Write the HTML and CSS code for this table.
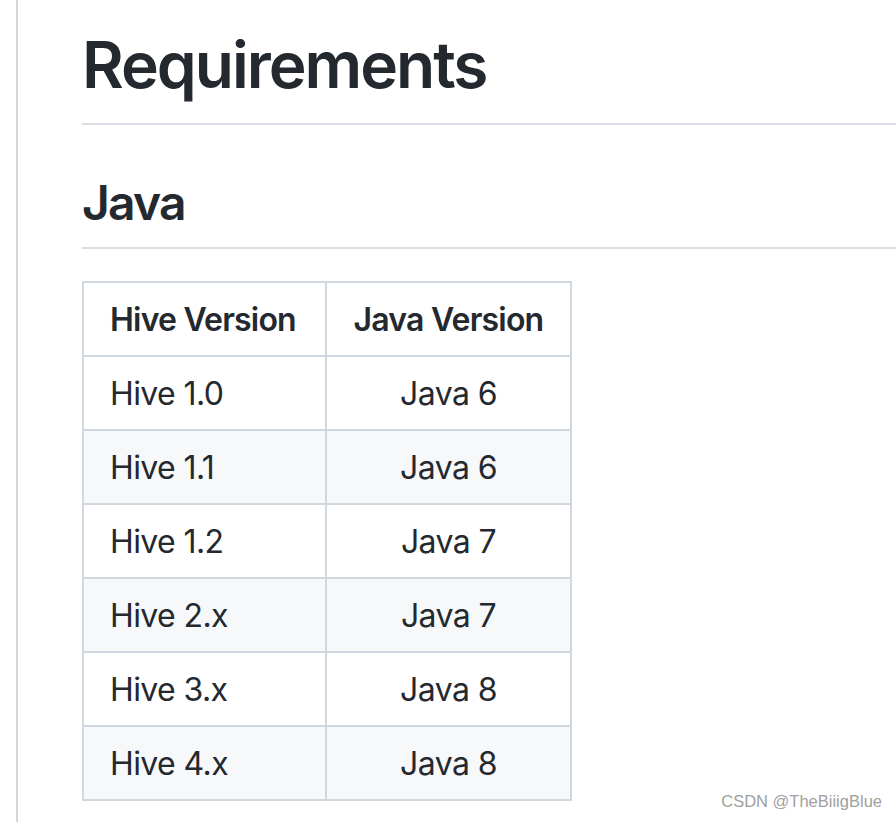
FILE: index.html
```html
<!DOCTYPE html>
<html lang="en">
<head>
<meta charset="utf-8">
<title>Requirements</title>
<link rel="stylesheet" href="styles.css">
</head>
<body>
<div class="page">
  <article class="markdown">
    <h1 class="h1">Requirements</h1>
    <h2 class="h2">Java</h2>
    <table class="tbl">
      <thead>
        <tr><th class="c1">Hive Version</th><th class="c2">Java Version</th></tr>
      </thead>
      <tbody>
        <tr><td class="c1">Hive 1.0</td><td class="c2">Java 6</td></tr>
        <tr><td class="c1">Hive 1.1</td><td class="c2">Java 6</td></tr>
        <tr><td class="c1">Hive 1.2</td><td class="c2">Java 7</td></tr>
        <tr><td class="c1">Hive 2.x</td><td class="c2">Java 7</td></tr>
        <tr><td class="c1">Hive 3.x</td><td class="c2">Java 8</td></tr>
        <tr><td class="c1">Hive 4.x</td><td class="c2">Java 8</td></tr>
      </tbody>
    </table>
  </article>
  <div class="watermark">CSDN @TheBiiigBlue</div>
</div>
</body>
</html>
```
FILE: styles.css
```css
html, body {
  margin: 0;
  padding: 0;
  background: #ffffff;
  overflow: hidden;
}
body {
  font-family: Inter, "Liberation Sans", sans-serif;
  color: #24292f;
  width: 896px;
  height: 822px;
}
.page {
  position: relative;
  height: 822px;
  padding-left: 16px;
  box-sizing: border-box;
}
.markdown {
  border-left: 2px solid #d0d7de;
  height: 822px;
  padding-left: 64px;
  box-sizing: border-box;
  font-size: 32px;
  line-height: 1.5;
}
.h1 {
  margin: 0 0 32px 0;
  padding-top: 25px;
  padding-bottom: 18px;
  font-size: 64px;
  line-height: 80px;
  font-weight: 600;
  border-bottom: 2px solid #d8dee4;
  letter-spacing: -2px;
}
.h2 {
  margin: 48px 0 32px 0;
  padding-bottom: 14px;
  font-size: 48px;
  line-height: 60px;
  font-weight: 600;
  border-bottom: 2px solid #d8dee4;
  letter-spacing: -1.8px;
}
.tbl {
  border-collapse: collapse;
  border-spacing: 0;
  table-layout: fixed;
  width: 490px;
  margin-top: 1px;
}
.tbl th, .tbl td {
  border: 2px solid #d0d7de;
  padding: 13px 26px 11px 26px;
  line-height: 48px;
  height: 48px;
  white-space: nowrap;
  letter-spacing: -0.6px;
}
.tbl th {
  font-weight: 600;
  letter-spacing: -0.8px;
}
.tbl .c1 {
  width: 189px;
  text-align: left;
}
.tbl .c2 {
  text-align: center;
}
.tbl tbody tr:nth-child(2n) {
  background: #f6f8fa;
}
.watermark {
  position: absolute;
  right: 14px;
  bottom: 11px;
  font-family: "Liberation Sans", Arial, sans-serif;
  font-size: 16.5px;
  color: #a0a0a0;
}
```
